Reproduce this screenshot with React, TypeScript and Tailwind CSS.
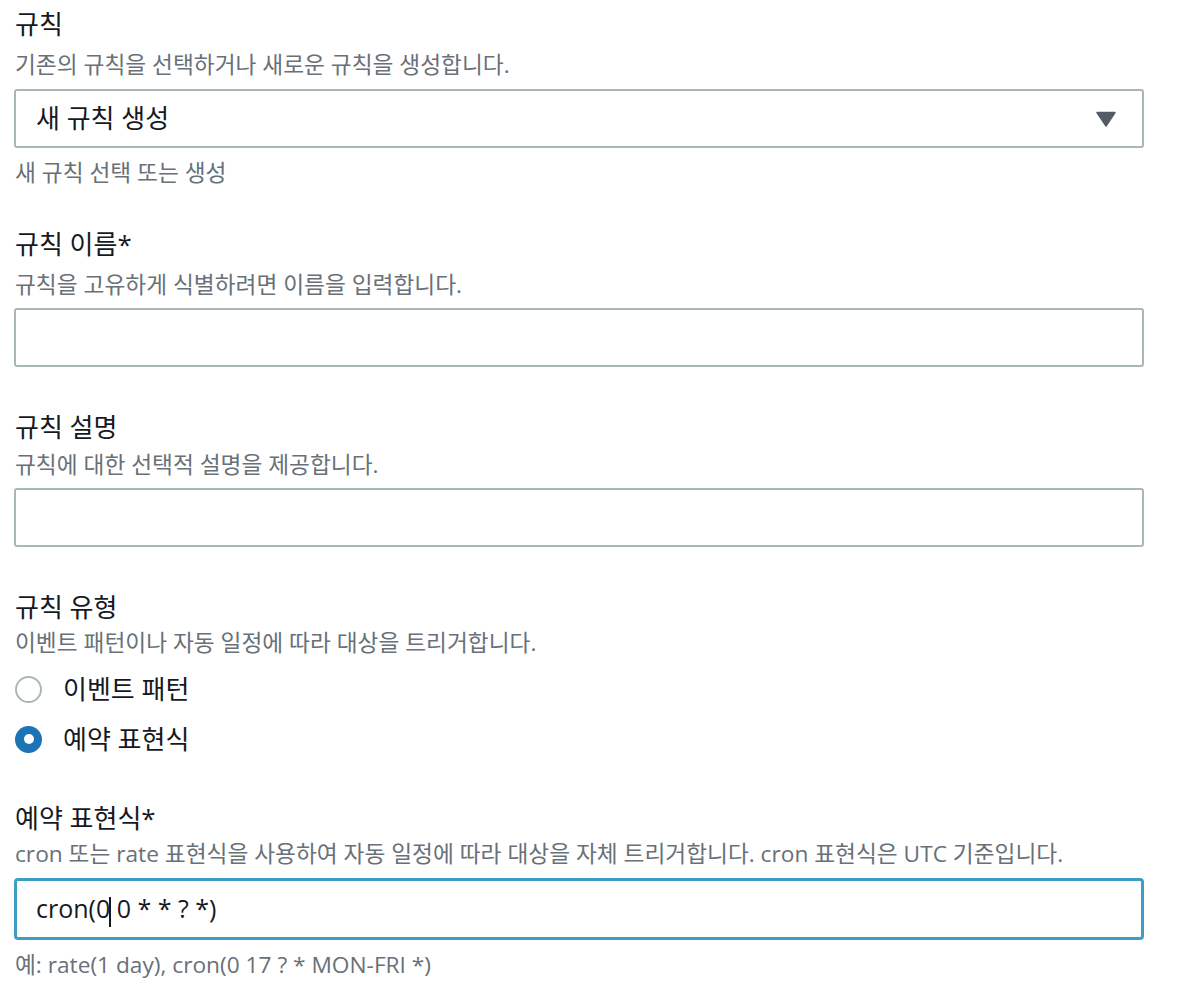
const font = "font-['Open_Sans','Noto_Sans_CJK_KR',sans-serif]";

const Label = ({ children, className = "" }: { children: React.ReactNode; className?: string }) => (
    <h3 className={`pl-[1px] text-[26px] leading-[36px] text-[#16191f] ${className}`}>{children}</h3>
);

const Desc = ({ children, className = "" }: { children: React.ReactNode; className?: string }) => (
    <p className={`pl-[1px] text-[22.7px] leading-[30px] text-[#687078] ${className}`}>{children}</p>
);

const Radio = ({ checked, label }: { checked?: boolean; label: string }) => (
    <label className="flex items-center gap-[21px] h-[50px] pl-[1px]">
        {checked ? (
            <span className="w-[27px] h-[27px] rounded-full bg-[#1b74b5] flex items-center justify-center">
                <span className="w-[10px] h-[10px] rounded-full bg-white" />
            </span>
        ) : (
            <span className="w-[27px] h-[27px] rounded-full border-2 border-[#aab7b8] bg-white" />
        )}
        <span className="text-[26px] text-[#16191f]">{label}</span>
    </label>
);

export default function App() {
    return (
        <div className={`min-h-screen bg-white ${font}`}>
            <div className="w-[1130px] ml-[14px] pt-[6px]">
                {/* 규칙 */}
                <Label>규칙</Label>
                <Desc className="mt-[8px]">기존의 규칙을 선택하거나 새로운 규칙을 생성합니다.</Desc>
                <div className="mt-[9px] h-[59px] border-2 border-[#aab7b8] rounded-[3px] flex items-center justify-between pl-[20px] pr-[26px]">
                    <span className="text-[26px] text-[#16191f]">새 규칙 생성</span>
                    <svg width="20" height="16" viewBox="0 0 20 16">
                        <path d="M1 1.5 H19 L10 15 Z" fill="#545b64" stroke="#545b64" strokeWidth="1.5" strokeLinejoin="round" />
                    </svg>
                </div>
                <Desc className="mt-[10px]">새 규칙 선택 또는 생성</Desc>

                {/* 규칙 이름 */}
                <Label className="mt-[38px]">규칙 이름*</Label>
                <Desc className="mt-[8px]">규칙을 고유하게 식별하려면 이름을 입력합니다.</Desc>
                <div className="mt-[8px] h-[59px] border-2 border-[#aab7b8] rounded-[3px]" />

                {/* 규칙 설명 */}
                <Label className="mt-[42px]">규칙 설명</Label>
                <Desc className="mt-[5px]">규칙에 대한 선택적 설명을 제공합니다.</Desc>
                <div className="mt-[8px] h-[59px] border-2 border-[#aab7b8] rounded-[3px]" />

                {/* 규칙 유형 */}
                <Label className="mt-[42px]">규칙 유형</Label>
                <Desc className="mt-[3px]">이벤트 패턴이나 자동 일정에 따라 대상을 트리거합니다.</Desc>
                <div className="mt-[6px] flex flex-col">
                    <Radio label="이벤트 패턴" />
                    <Radio checked label="예약 표현식" />
                </div>

                {/* 예약 표현식 */}
                <Label className="mt-[36px]">예약 표현식*</Label>
                <Desc className="mt-[3px]">cron 또는 rate 표현식을 사용하여 자동 일정에 따라 대상을 자체 트리거합니다. cron 표현식은 UTC 기준입니다.</Desc>
                <div className="mt-[9px] h-[62px] border-[3px] border-[#3f9dc5] rounded-[4px] flex items-center pl-[19px]">
                    <span className="text-[25px] text-[#16191f]">
                        cron(0<span className="inline-block w-[1.5px] h-[30px] bg-[#16191f] align-middle -mx-[0.75px]" /> 0 * * ? *)
                    </span>
                </div>
                <Desc className="mt-[10px]">예: rate(1 day), cron(0 17 ? * MON-FRI *)</Desc>
            </div>
        </div>
    );
}
